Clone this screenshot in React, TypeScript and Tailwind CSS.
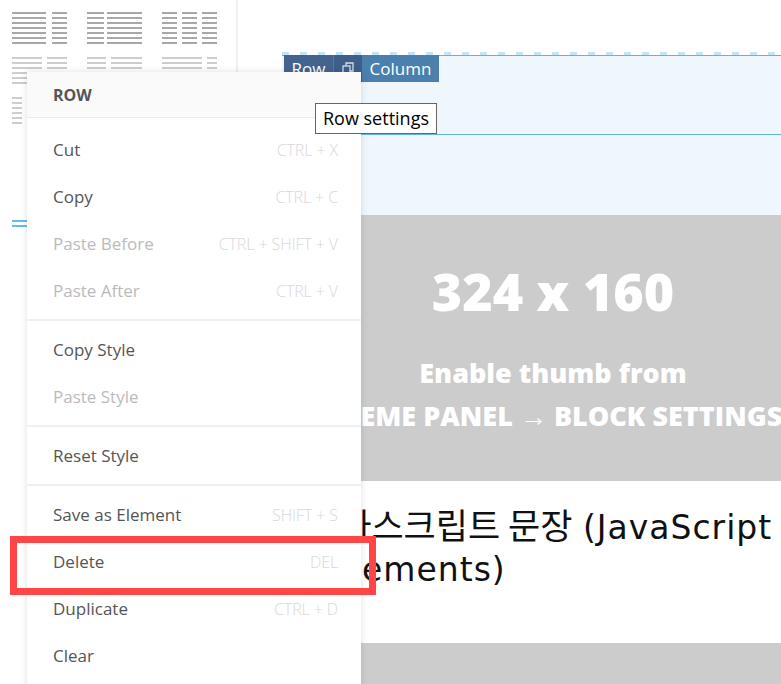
import { ReactNode } from "react";

type Thumb = { cols: number[]; gap: number; lines: number; tone: string; pitch: number };

const presets: Thumb[][] = [
  [
    { cols: [34, 15], gap: 6, lines: 7, tone: "bg-[#a8a8a8]", pitch: 5 },
    { cols: [17, 35], gap: 3, lines: 7, tone: "bg-[#a8a8a8]", pitch: 5 },
    { cols: [15, 15, 15], gap: 5, lines: 7, tone: "bg-[#a8a8a8]", pitch: 5 },
  ],
  [
    { cols: [30, 20], gap: 5, lines: 6, tone: "bg-[#cdcdcd]", pitch: 5 },
    { cols: [19, 31], gap: 5, lines: 6, tone: "bg-[#cdcdcd]", pitch: 5 },
    { cols: [40, 10], gap: 5, lines: 6, tone: "bg-[#cdcdcd]", pitch: 5 },
  ],
  [
    { cols: [10, 40], gap: 5, lines: 6, tone: "bg-[#cdcdcd]", pitch: 5 },
    { cols: [25, 25], gap: 5, lines: 6, tone: "bg-[#cdcdcd]", pitch: 5 },
    { cols: [50], gap: 5, lines: 6, tone: "bg-[#cdcdcd]", pitch: 5 },
  ],
];

function LayoutThumb({ t }: { t: Thumb }) {
  return (
    <div className="flex w-[55px]" style={{ gap: t.gap }}>
      {t.cols.map((w, i) => (
        <div key={i} className="flex flex-col gap-[3px]" style={{ width: w }}>
          {Array.from({ length: t.lines }).map((_, j) => (
            <div key={j} className={`h-[2px] ${t.tone}`} />
          ))}
        </div>
      ))}
    </div>
  );
}

type Item = { label: string; key?: string; off?: boolean };

const groups: Item[][] = [
  [
    { label: "Cut", key: "CTRL + X" },
    { label: "Copy", key: "CTRL + C" },
    { label: "Paste Before", key: "CTRL + SHIFT + V", off: true },
    { label: "Paste After", key: "CTRL + V", off: true },
  ],
  [{ label: "Copy Style" }, { label: "Paste Style", off: true }],
  [{ label: "Reset Style" }],
  [
    { label: "Save as Element", key: "SHIFT + S" },
    { label: "Delete", key: "DEL" },
    { label: "Duplicate", key: "CTRL + D" },
    { label: "Clear" },
  ],
];

function MenuRow({ item }: { item: Item }) {
  return (
    <div className="flex h-[47px] items-center justify-between">
      <span className={`text-[17px] ${item.off ? "text-[#bbbbbb]" : "text-[#555555]"}`}>
        {item.label}
      </span>
      {item.key && (
        <span className="text-[16px] font-light tracking-[-0.1px] text-[#d8d8d8]">
          {item.key}
        </span>
      )}
    </div>
  );
}

function ContextMenu() {
  return (
    <div className="absolute left-[27px] top-[72px] w-[334px] bg-white shadow-[0_0_7px_rgba(0,0,0,0.13)]">
      <div className="flex h-[46px] items-center border-b border-[#ececec] bg-[#fafafa] pl-[26px] text-[16px] font-bold text-[#555]">
        ROW
      </div>
      {groups.map((g, i) => (
        <div
          key={i}
          className={`pl-[26px] pr-[23px] ${i === 0 ? "pt-[8px]" : "pt-[5px]"} ${
            i < groups.length - 1 ? "border-b-2 border-[#f0f0f0] pb-[5px]" : "pb-[20px]"
          }`}
        >
          {g.map((item) => (
            <MenuRow key={item.label} item={item} />
          ))}
        </div>
      ))}
    </div>
  );
}

function Cell({ children, className }: { children: ReactNode; className: string }) {
  return <div className={`flex h-[27px] items-center justify-center text-[17px] text-white ${className}`}>{children}</div>;
}

export default function App() {
  return (
    <div className="relative h-[684px] w-[781px] overflow-hidden bg-white font-['Open_Sans',sans-serif]">
      <div className="flex h-full">
        {/* layout presets panel */}
        <aside className="w-[238px] shrink-0 border-r-2 border-[#efefef] pl-3 pt-3">
          <div className="flex flex-col gap-[13px]">
            {presets.map((row, i) => (
              <div key={i} className="flex gap-[20px]">
                {row.map((t, j) => (
                  <LayoutThumb key={j} t={t} />
                ))}
              </div>
            ))}
          </div>
          <div className="mt-[96px] flex w-[15px] flex-col gap-[3px]">
            <div className="h-[2px] bg-[#68b9ee]" />
            <div className="h-[2px] bg-[#68b9ee]" />
          </div>
        </aside>

        {/* canvas */}
        <main className="min-w-0 flex-1 pl-[44px] pt-[52px]">
          <div className="w-[542px]">
            <div className="h-[3px] bg-[repeating-linear-gradient(90deg,#c4e3f6_0_7px,transparent_7px_18px)]" />
            <section className="relative border-t border-[#5bb4ec] bg-[#eff7fd]">
              <div className="absolute left-[2px] top-[-1px] flex">
                <Cell className="w-[49px] bg-[#44648f]">Row</Cell>
                <Cell className="w-[29px] border-l border-[#5a77a0] bg-[#3f5f8b]">
                  <svg width="12" height="13" viewBox="0 0 12 13" fill="none" stroke="#d6dfea" strokeWidth="1.3">
                    <rect x="1" y="4" width="7" height="8" />
                    <path d="M4 4V1h7v8H8" />
                  </svg>
                </Cell>
                <Cell className="w-[77px] bg-[#4b80ae]">Column</Cell>
              </div>
              <div className="h-[79px] border-b border-[#5bb4ec]" />
              <div className="h-[80px]" />
            </section>
            <div className="flex h-[266px] flex-col items-center bg-[#cccccc] pt-[50px] font-extrabold text-white">
              <div className="text-[52px] leading-[52px]">324 x 160</div>
              <div className="mt-[41px] text-[27px] leading-[30px]">Enable thumb from</div>
              <div className="mt-[13px] whitespace-nowrap text-[27px] leading-[30px]">
                THEME PANEL → BLOCK SETTINGS
              </div>
            </div>
            <h2 className="mt-[22px] h-[84px] pl-[9px] pr-4 indent-[16px] font-['DejaVu_Sans','Noto_Sans_CJK_KR',sans-serif] text-[33px] leading-[42px] text-[#111]">
              <span className="font-['Noto_Sans_CJK_KR',sans-serif] text-[35px]">자바스크립트 문장</span>{" "}
              <span className="tracking-[1px]">(JavaScript Statements)</span>
            </h2>
            <div className="mt-[56px] h-[60px] bg-[#cccccc]" />
          </div>
        </main>
      </div>

      <ContextMenu />

      <div className="absolute left-[315px] top-[103px] flex h-[31px] w-[122px] items-center justify-center border border-[#666] bg-white text-[18px] text-black">
        Row settings
      </div>

      <div className="absolute left-[10px] top-[536px] h-[59px] w-[366px] border-[7px] border-[#ff4545]" />
    </div>
  );
}
